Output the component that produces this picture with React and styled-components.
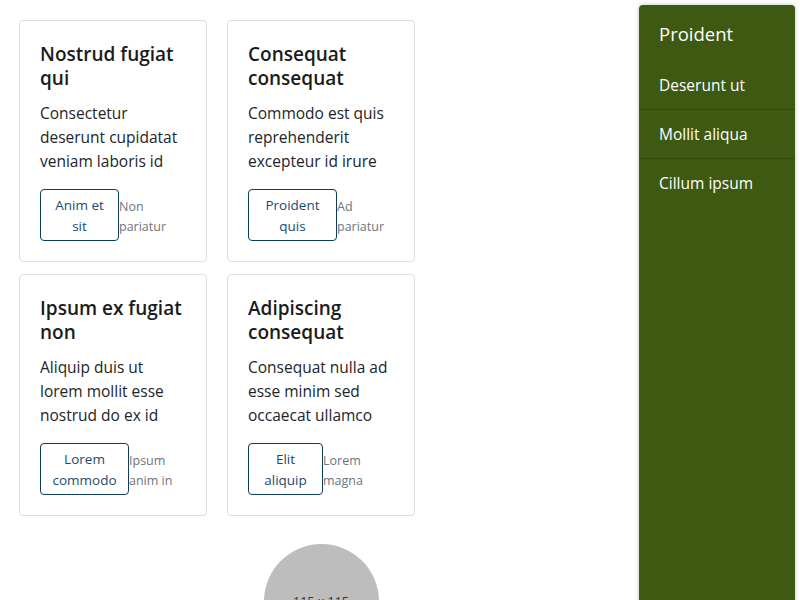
import React from "react";
import styled, { createGlobalStyle } from "styled-components";

const Global = createGlobalStyle`
  html, body { margin: 0; padding: 0; background: #fff; }
  body { font-family: "Open Sans", "Noto Sans", Arial, sans-serif; color: #212529; overflow: hidden; }
  * { box-sizing: border-box; }
`;

const Page = styled.div`
  display: flex;
  align-items: flex-start;
  width: 800px;
  height: 600px;
  overflow: hidden;
`;

const Main = styled.main`
  flex: 1;
  padding: 20px 16px 0 19px;
  display: flex;
  flex-direction: column;
`;

const Grid = styled.div`
  display: grid;
  grid-template-columns: repeat(2, 188px);
  column-gap: 20px;
  row-gap: 12px;
`;

const Card = styled.div`
  border: 1px solid #dedede;
  border-radius: 4px;
  padding: 20px;
  display: flex;
  flex-direction: column;
`;

const Title = styled.h3`
  margin: 1px 0 0;
  font-size: 19px;
  font-weight: 600;
  line-height: 24px;
  color: #1b1b1b;
`;

const Body = styled.p`
  margin: 11px 0 0;
  font-size: 15.5px;
  line-height: 24px;
  color: #212529;
`;

const Actions = styled.div`
  margin-top: 16px;
  display: flex;
  align-items: center;
`;

const Button = styled.button`
  flex: none;
  width: ${(p) => p.$w}px;
  height: 52px;
  padding: 5px 6px 3px;
  background: #fff;
  border: 1px solid #0f3d5c;
  border-radius: 4px;
  color: #1b4a6e;
  font-family: inherit;
  font-size: 13.5px;
  line-height: 21px;
  text-align: center;
`;

const Note = styled.span`
  flex: 1;
  min-width: 0;
  padding-top: 3px;
  font-size: 12.5px;
  line-height: 20px;
  color: #6c757d;
`;

const Avatar = styled.div`
  align-self: center;
  margin-top: 28px;
  width: 115px;
  height: 115px;
  flex: none;
  border-radius: 50%;
  background: #bdbdbd;
  color: #333;
  font-size: 12.5px;
  display: flex;
  align-items: center;
  justify-content: center;
`;

const Sidebar = styled.aside`
  flex: none;
  width: 156px;
  height: 620px;
  margin: 5px 5px 0 0;
  background: #3d5912;
  border-radius: 4px 4px 0 0;
  box-shadow: 0 0 4px rgba(0, 0, 0, 0.25);
  color: #fff;
`;

const SideHeader = styled.div`
  padding: 17px 20px 15px;
  font-size: 18.5px;
  line-height: 24px;
`;

const SideItem = styled.div`
  padding: 12px 20px;
  font-size: 15.5px;
  line-height: 24px;
  border-bottom: 1px solid ${(p) => (p.$last ? "transparent" : "rgba(0,0,0,0.18)")};
`;

const cards = [
  { t: "Nostrud fugiat qui", b: "Consectetur deserunt cupidatat veniam laboris id", btn: "Anim et sit", w: 79, n: "Non pariatur" },
  { t: "Consequat consequat", b: "Commodo est quis reprehenderit excepteur id irure", btn: "Proident quis", w: 89, n: "Ad pariatur" },
  { t: "Ipsum ex fugiat non", b: "Aliquip duis ut lorem mollit esse nostrud do ex id", btn: "Lorem commodo", w: 89, n: "Ipsum anim in" },
  { t: "Adipiscing consequat", b: "Consequat nulla ad esse minim sed occaecat ullamco", btn: "Elit aliquip", w: 75, n: "Lorem magna" },
];

const items = ["Deserunt ut", "Mollit aliqua", "Cillum ipsum"];

export default function App() {
  return (
    <>
      <Global />
      <Page>
        <Main>
          <Grid>
            {cards.map((c) => (
              <Card key={c.t}>
                <Title>{c.t}</Title>
                <Body>{c.b}</Body>
                <Actions>
                  <Button $w={c.w}>{c.btn}</Button>
                  <Note>{c.n}</Note>
                </Actions>
              </Card>
            ))}
          </Grid>
          <Avatar>115 x 115</Avatar>
        </Main>
        <Sidebar>
          <SideHeader>Proident</SideHeader>
          {items.map((it, i) => (
            <SideItem key={it} $last={i === items.length - 1}>{it}</SideItem>
          ))}
        </Sidebar>
      </Page>
    </>
  );
}
